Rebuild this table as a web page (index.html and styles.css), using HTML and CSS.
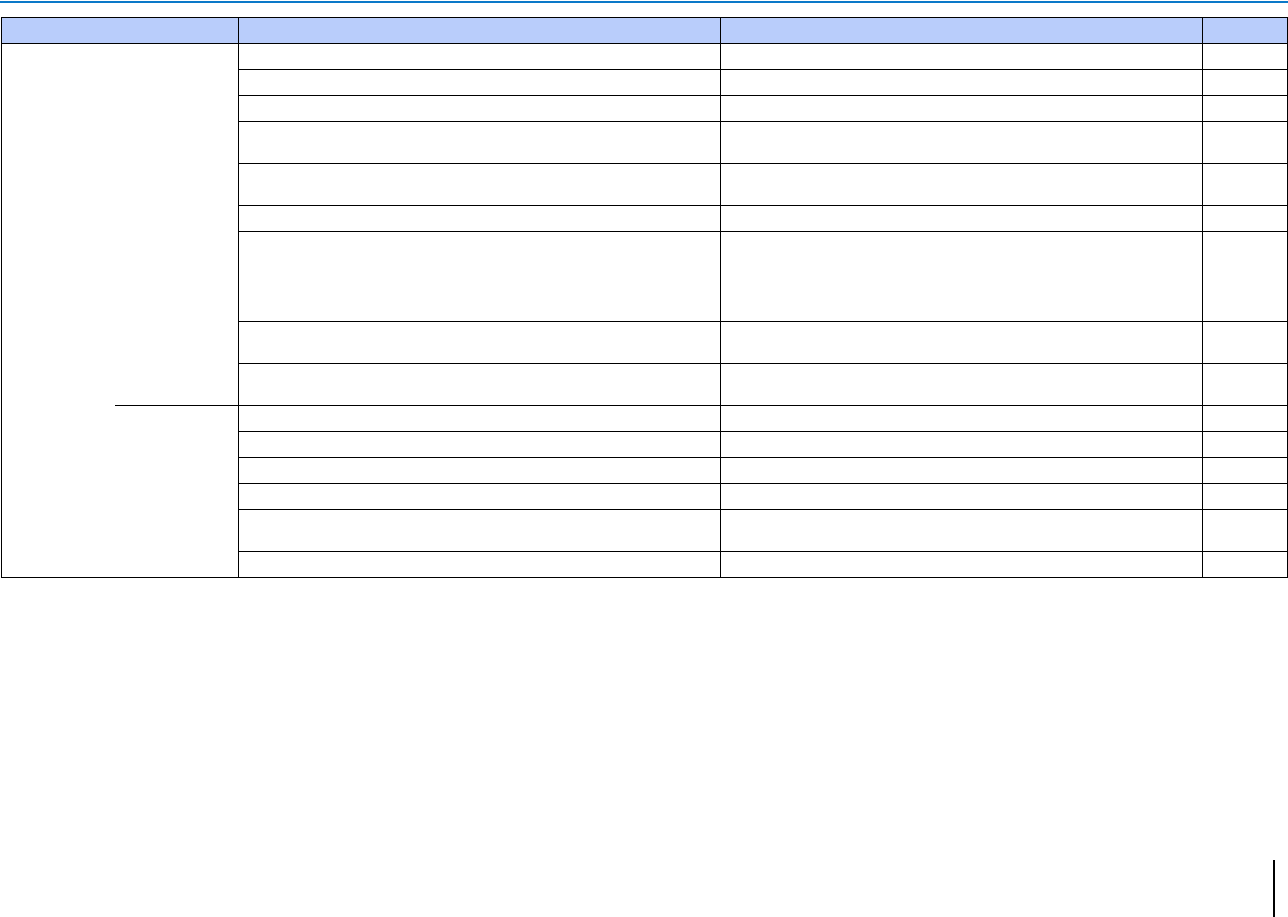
FILE: index.html
```html
<!DOCTYPE html>
<html lang="en">
<head>
  <meta charset="UTF-8" />
  <meta name="viewport" content="width=device-width, initial-scale=1.0" />
  <title>Specification table</title>
  <link rel="stylesheet" href="styles.css">
</head>
<body>
  <!-- TOP RULE -->
  <div class="top-rule"></div>

  <!-- TABLE -->
  <table class="spec">
    <colgroup>
      <col class="c-a"><col class="c-b"><col class="c-c"><col class="c-d"><col class="c-e">
    </colgroup>
    <thead>
      <tr class="h1"><th colspan="2"></th><th></th><th></th><th></th></tr>
    </thead>
    <tbody>
      <tr class="h1"><td class="cat" rowspan="15"></td><td class="sub" rowspan="9"></td><td></td><td></td><td></td></tr>
      <tr class="h1"><td></td><td></td><td></td></tr>
      <tr class="h1"><td></td><td></td><td></td></tr>
      <tr class="h2"><td></td><td></td><td></td></tr>
      <tr class="h2"><td></td><td></td><td></td></tr>
      <tr class="h1"><td></td><td></td><td></td></tr>
      <tr class="h4"><td></td><td></td><td></td></tr>
      <tr class="h2"><td></td><td></td><td></td></tr>
      <tr class="h2"><td></td><td></td><td></td></tr>
      <tr class="h1"><td class="sub" rowspan="6"></td><td></td><td></td><td></td></tr>
      <tr class="h1"><td></td><td></td><td></td></tr>
      <tr class="h1"><td></td><td></td><td></td></tr>
      <tr class="h1"><td></td><td></td><td></td></tr>
      <tr class="h2"><td></td><td></td><td></td></tr>
      <tr class="h1"><td></td><td></td><td></td></tr>
    </tbody>
  </table>

  <!-- PAGE EDGE MARK -->
  <div class="edge-mark"></div>
</body>
</html>
```

FILE: styles.css
```css
* {margin: 0; padding: 0; box-sizing: border-box;}
body {
  font-family: 'Liberation Sans', Arial, sans-serif;
  background: #ffffff;
  color: #000;
  overflow: hidden;
}

/* Top rule */
.top-rule {height: 2px; margin-top: 1px; background: #0a78c8;}

/* Table */
.spec {
  margin: 14px 0 0 1px;
  width: 1286px;
  border-collapse: collapse;
  table-layout: fixed;
}
.c-a {width: 113px;}
.c-b {width: 124px;}
.c-c {width: 482px;}
.c-d {width: 482px;}
.c-e {width: 85px;}

.spec th, .spec td {border: 1px solid #000; padding: 0;}
.spec th {background: #b9cdfb;}

.spec .h1 td, .spec .h1 th {height: 26px;}
.spec .h2 td {height: 42px;}
.spec .h4 td {height: 90px;}

.spec td.cat {border-right: none;}
.spec td.sub {border-left: none;}

/* Page edge mark */
.edge-mark {width: 2px; height: 57px; margin: 282px 0 0 1273px; background: #000;}
```
